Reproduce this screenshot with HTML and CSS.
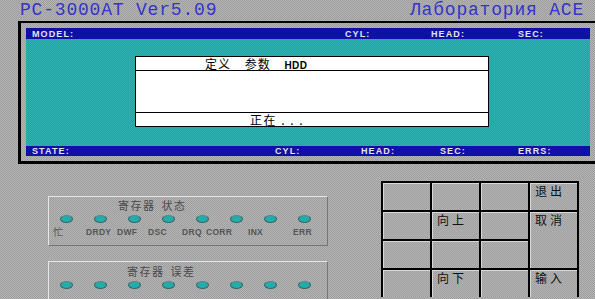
FILE: index.html
```html
<!DOCTYPE html>
<html>
<head>
<meta charset="utf-8">
<link rel="stylesheet" href="styles.css">
</head>
<body>
<div class="screen">
  <header class="top">
    <span class="title">PC-3000AT Ver5.09</span>
    <span class="title">Лаборатория ACE</span>
  </header>
  <section class="frame">
    <div class="bar bar-top">
      <span class="f-model">MODEL:</span>
      <span class="f-cyl">CYL:</span>
      <span class="f-head">HEAD:</span>
      <span class="f-sec">SEC:</span>
    </div>
    <div class="work">
      <div class="dialog">
        <div class="d-title">定义 参数 <b>HDD</b></div>
        <div class="d-body"></div>
        <div class="d-foot">正在 . . .</div>
      </div>
    </div>
    <div class="bar bar-bottom">
      <span class="b-state">STATE:</span>
      <span class="b-cyl">CYL:</span>
      <span class="b-head">HEAD:</span>
      <span class="b-sec">SEC:</span>
      <span class="b-errs">ERRS:</span>
    </div>
  </section>
  <section class="lower">
    <div class="panels">
      <div class="panel p1">
        <div class="p-title">寄存器 状态</div>
        <div class="leds">
          <i class="led"></i><i class="led"></i><i class="led"></i><i class="led"></i>
          <i class="led"></i><i class="led"></i><i class="led"></i><i class="led"></i>
        </div>
        <div class="labels">
          <span class="lb cjk">忙</span><span class="lb">DRDY</span><span class="lb">DWF</span><span class="lb">DSC</span>
          <span class="lb">DRQ</span><span class="lb">CORR</span><span class="lb">INX</span><span class="lb">ERR</span>
        </div>
      </div>
      <div class="panel p2">
        <div class="p-title">寄存器 误差</div>
        <div class="leds">
          <i class="led"></i><i class="led"></i><i class="led"></i><i class="led"></i>
          <i class="led"></i><i class="led"></i><i class="led"></i><i class="led"></i>
        </div>
      </div>
    </div>
    <div class="keys">
      <div class="key"></div><div class="key"></div><div class="key"></div><div class="key">退出</div>
      <div class="key"></div><div class="key">向上</div><div class="key"></div><div class="key tall">取消</div>
      <div class="key"></div><div class="key"></div><div class="key"></div>
      <div class="key"></div><div class="key">向下</div><div class="key"></div><div class="key">输入</div>
    </div>
  </section>
</div>
</body>
</html>
```
FILE: styles.css
```css
html, body {
  margin: 0;
  padding: 0;
}
body {
  width: 595px;
  height: 299px;
  overflow: hidden;
  background: repeating-conic-gradient(#b4b4b4 0 25%, #9e9e9e 0 50%) 0 0 / 2px 2px;
  font-family: "Liberation Sans", "Noto Sans CJK SC", sans-serif;
}
.screen {
  width: 595px;
  height: 299px;
  display: flex;
  flex-direction: column;
}
.top {
  height: 22px;
  display: flex;
  justify-content: space-between;
  align-items: center;
  padding: 0 11px 0 20px;
}
.title {
  font-family: "Liberation Mono", monospace;
  font-size: 18px;
  letter-spacing: 0.8px;
  color: #3434c8;
  line-height: 22px;
  margin-top: -1px;
}
.frame {
  margin-left: 18px;
  width: 577px;
  box-sizing: border-box;
  border-top: 2px solid #000;
  border-left: 3px solid #000;
  border-bottom: 3px solid #000;
  padding: 5px 5px 5px 5px;
  display: flex;
  flex-direction: column;
}
.bar {
  background: #1010a8;
  color: #e4e4e4;
  font-family: "Liberation Sans", sans-serif;
  font-weight: bold;
  font-size: 9px;
  letter-spacing: 1.1px;
  display: flex;
  align-items: center;
  padding-left: 6px;
}
.bar-top { height: 11px; }
.bar-bottom { height: 10px; }
.f-model { width: 313px; }
.f-cyl { width: 86px; }
.f-head { width: 87px; }
.b-state { width: 243px; }
.b-cyl { width: 86px; }
.b-head { width: 79px; }
.b-sec { width: 78px; }
.work {
  height: 107px;
  background: repeating-conic-gradient(#34b2b2 0 25%, #1ea2a2 0 50%) 0 0 / 2px 2px;
  padding: 17px 0 0 109px;
  box-sizing: border-box;
}
.dialog {
  width: 354px;
  height: 71px;
  box-sizing: border-box;
  background: #fff;
  border: 1px solid #000;
  display: flex;
  flex-direction: column;
}
.d-title {
  height: 13px;
  border-bottom: 1px solid #000;
  font-family: "Noto Sans CJK SC", sans-serif;
  font-size: 12px;
  line-height: 13px;
  padding-left: 69px;
  word-spacing: 10px;
  letter-spacing: 1px;
}
.d-title b {
  font-family: "Liberation Sans", sans-serif;
  font-size: 10px;
  letter-spacing: 0.5px;
}
.d-body {
  height: 42px;
  border-bottom: 1px solid #000;
}
.d-foot {
  flex: 1;
  font-family: "Noto Sans CJK SC", sans-serif;
  font-size: 12px;
  line-height: 13px;
  padding-left: 114px;
  letter-spacing: 1.5px;
}
.lower {
  display: flex;
  flex: 1;
}
.panels {
  padding: 32px 0 0 48px;
  display: flex;
  flex-direction: column;
  gap: 15px;
}
.panel {
  width: 280px;
  height: 50px;
  box-sizing: border-box;
  border: 1px solid;
  border-color: #e6e6e6 #767676 #767676 #e6e6e6;
}
.p-title {
  font-family: "Noto Sans CJK SC", sans-serif;
  font-size: 11px;
  line-height: 13px;
  color: #4a4a4a;
  letter-spacing: 1.5px;
  word-spacing: 2px;
  margin-top: 2px;
}
.p1 .p-title { padding-left: 69px; }
.p2 .p-title { padding-left: 78px; margin-top: 3px; }
.leds {
  display: flex;
  gap: 21px;
  padding-left: 11px;
  height: 9px;
  margin-top: 3px;
}
.led {
  display: block;
  width: 13px;
  height: 8px;
  box-sizing: border-box;
  border-radius: 50%;
  background: #22acac;
  border: 1px solid #3c6464;
  border-top-color: #5a8a8a;
}
.labels {
  display: grid;
  grid-template-columns: 33px 31px 31px 34px 24px 42px 45px 30px;
  padding-left: 4px;
  margin-top: 3px;
  font-size: 8.5px;
  font-weight: bold;
  color: #555;
  letter-spacing: 0.3px;
  line-height: 10px;
}
.lb.cjk {
  font-family: "Noto Sans CJK SC", sans-serif;
  font-weight: normal;
  font-size: 10px;
}
.keys {
  margin: 17px 0 0 53px;
  align-self: flex-start;
  display: grid;
  grid-template-columns: repeat(4, 47px);
  grid-template-rows: repeat(4, 27px);
  gap: 2px;
  background: #000;
  border: 2px solid #000;
  border-bottom: 0;
}
.key {
  background: repeating-conic-gradient(#b2b2b2 0 25%, #a0a0a0 0 50%) 0 0 / 2px 2px;
  box-shadow: inset 1px 1px 0 #d8d8d8;
  font-family: "Noto Sans CJK SC", sans-serif;
  font-size: 12px;
  line-height: 14px;
  color: #111;
  padding: 1px 0 0 5px;
  letter-spacing: 3px;
}
.key.tall {
  grid-row: span 2;
}
```
